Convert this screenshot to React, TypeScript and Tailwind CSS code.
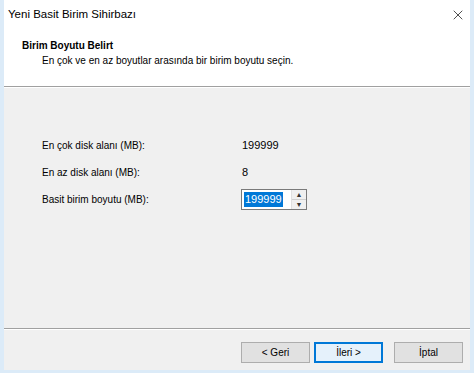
import { X } from 'lucide-react'

const rows = [
  { label: 'En çok disk alanı (MB):', value: '199999' },
  { label: 'En az disk alanı (MB):', value: '8' },
]

function Spinner() {
  return (
    <div className="flex h-[21px] w-[66px] items-stretch border border-[#7a7a7a] bg-white">
      <div className="flex flex-1 items-center pl-[2px]">
        <span className="bg-[#0078d7] px-[1px] text-[11px] leading-[15px] text-white">199999</span>
      </div>
      <div className="flex w-[15px] flex-col border-l border-[#e0e0e0] bg-[#f0f0f0]">
        <div className="flex flex-1 items-center justify-center border-b border-[#d0d0d0] text-[7px] leading-none text-[#333]">▲</div>
        <div className="flex flex-1 items-center justify-center text-[7px] leading-none text-[#333]">▼</div>
      </div>
    </div>
  )
}

function WinButton({ label, focused }: { label: string; focused?: boolean }) {
  return (
    <button
      className={
        focused
          ? 'h-[21px] w-[69px] border-2 border-[#0078d7] bg-[#e5f1fb] text-[10px] text-black'
          : 'h-[21px] w-[69px] border border-[#adadad] bg-[#e1e1e1] text-[10px] text-black'
      }
    >
      {label}
    </button>
  )
}

export default function App() {
  return (
    <div
      className="flex h-[373px] w-[474px] flex-col bg-[#dcebf8] px-[4px] pb-[3px]"
      style={{ fontFamily: '"Liberation Sans", Arial, sans-serif' }}
    >
      <div className="flex flex-1 flex-col bg-[#f0f0f0]">
        <div className="flex h-[30px] items-center justify-between bg-white pl-[4px] pr-[4px]">
          <span className="text-[11.5px] text-black">Yeni Basit Birim Sihirbazı</span>
          <X size={16} strokeWidth={1.2} className="text-[#222]" />
        </div>
        <div className="h-[56px] bg-white pl-[18px] pt-[9px]">
          <div className="text-[10px] font-bold leading-[14px] text-black">Birim Boyutu Belirt</div>
          <div className="pl-[20px] text-[10px] leading-[15px] text-black">
            En çok ve en az boyutlar arasında bir birim boyutu seçin.
          </div>
        </div>
        <div className="h-px bg-[#a0a0a0]" />
        <div className="h-px bg-white" />
        <div className="flex flex-1 flex-col gap-[13px] pl-[38px] pt-[50px] text-[10px] text-black">
          {rows.map((r) => (
            <div key={r.label} className="flex h-[14px] items-center">
              <span className="w-[200px]">{r.label}</span>
              <span className="text-[11px]">{r.value}</span>
            </div>
          ))}
          <div className="-mt-[3px] flex items-center">
            <span className="w-[199px]">Basit birim boyutu (MB):</span>
            <Spinner />
          </div>
        </div>
        <div className="h-px bg-[#a0a0a0]" />
        <div className="h-px bg-white" />
        <div className="flex h-[40px] items-start gap-[4px] pl-[237px] pt-[12px]">
          <WinButton label="< Geri" />
          <WinButton label="İleri >" focused />
          <div className="w-[3px]" />
          <WinButton label="İptal" />
        </div>
      </div>
    </div>
  )
}
